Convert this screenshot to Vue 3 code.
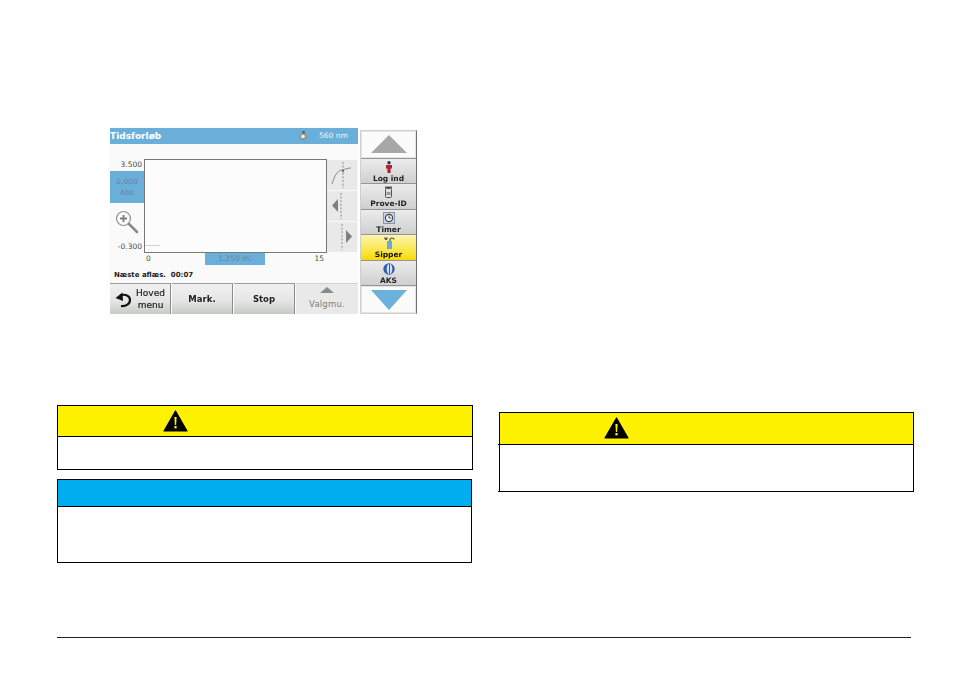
<template>
  <div class="page">
    <!-- instrument screen -->
    <div class="device">
      <div class="screen">
        <div class="title-bar">
          <span class="title">Tidsforløb</span>
          <svg class="lamp" width="9" height="12" viewBox="0 0 9 12">
            <circle cx="4.500" cy="7" r="3.600" fill="#96978e" />
            <circle cx="4" cy="6.500" r="1.800" fill="#f4f3ea" />
            <rect x="3.200" y="1" width="2.600" height="2.400" fill="#5d6166" />
          </svg>
          <span class="wavelength">560 nm</span>
        </div>

        <div class="chart-row">
          <div class="y-col">
            <div class="y-label top">3.500</div>
            <div class="abs-box">
              <span>0.000</span>
              <span>Abs</span>
            </div>
            <div class="zoom-wrap">
              <svg width="24" height="24" viewBox="0 0 24 24">
                <circle cx="8.500" cy="8.500" r="7" fill="#fafafa" stroke="#8f8f8f" stroke-width="1.200" />
                <path d="M8.500 5v7M5 8.500h7" stroke="#7d7d7d" stroke-width="1.800" />
                <path d="M14 14l8 8" stroke="#8a8a8a" stroke-width="2.600" stroke-linecap="round" />
              </svg>
            </div>
            <div class="y-label">-0.300</div>
          </div>

          <div class="plot">
            <span class="trace"></span>
          </div>

          <div class="side-tools">
            <div class="side-tool">
              <svg width="24" height="28" viewBox="0 0 24 28">
                <path d="M13 1v26" stroke="#8c8c8c" stroke-dasharray="2 1.600" />
                <path d="M2 23C5 14 7 10 12 9c4-1 6-2 9-2" fill="none" stroke="#8c8c8c" />
                <circle cx="13" cy="10" r="1.200" fill="#777" />
              </svg>
            </div>
            <div class="side-tool">
              <svg width="24" height="28" viewBox="0 0 24 28">
                <path d="M11 1v26" stroke="#8c8c8c" stroke-dasharray="2 1.600" />
                <path d="M8 7v13L2 13.500z" fill="#7f7f7f" />
              </svg>
            </div>
            <div class="side-tool">
              <svg width="24" height="28" viewBox="0 0 24 28">
                <path d="M12 1v26" stroke="#8c8c8c" stroke-dasharray="2 1.600" />
                <path d="M16 7v13l6-6.500z" fill="#7f7f7f" />
              </svg>
            </div>
          </div>
        </div>

        <div class="x-row">
          <span class="x-start">0</span>
          <span class="x-box">1.250 m.</span>
          <span class="x-end">15</span>
        </div>

        <div class="next-read">Næste aflæs.&nbsp; 00:07</div>

        <div class="actions">
          <div class="action home">
            <svg width="17" height="17" viewBox="0 0 17 17">
              <path d="M5 5C9 2.500 15 4 15 9c0 4-4 6.500-9 6" fill="none" stroke="#111" stroke-width="2.200" />
              <path d="M7.500 1.500l.5 8.500-7.500-3z" fill="#111" />
            </svg>
            <span class="home-text">Hoved<br />menu</span>
          </div>
          <div class="action">Mark.</div>
          <div class="action">Stop</div>
          <div class="action disabled">
            <span class="mini-up"></span>
            <span>Valgmu.</span>
          </div>
        </div>
      </div>

      <div class="panel">
        <div class="arrow-btn">
          <span class="arrow-up"></span>
        </div>

        <div class="tool">
          <svg width="8" height="12" viewBox="0 0 8 12">
            <circle cx="4" cy="1.800" r="1.700" fill="#2b3350" />
            <path d="M1 4h6v3.500H5.600V12H2.400V7.500H1z" fill="#a8262e" />
          </svg>
          <span>Log ind</span>
        </div>
        <div class="tool">
          <svg width="9" height="12" viewBox="0 0 9 12">
            <rect x="1" y="0.500" width="7" height="2" fill="#555" />
            <rect x="1.500" y="2.500" width="6" height="9" rx="1" fill="#e2e2da" stroke="#555" />
            <rect x="2.500" y="6" width="4" height="3" fill="#9a9a90" />
          </svg>
          <span>Prove-ID</span>
        </div>
        <div class="tool">
          <svg width="12" height="12" viewBox="0 0 12 12">
            <rect x="0.500" y="0.500" width="11" height="11" fill="#c7d3e6" stroke="#8b95a8" />
            <circle cx="6" cy="6" r="3.600" fill="#f4f4f4" stroke="#444" stroke-width="1.200" />
            <path d="M6 3.500V6h2" fill="none" stroke="#444" />
          </svg>
          <span>Timer</span>
        </div>
        <div class="tool active">
          <svg width="14" height="12" viewBox="0 0 14 12">
            <path d="M8 4V2.500Q8 1 10 1t2 1.500" fill="none" stroke="#444" stroke-width="1.200" />
            <path d="M2 0.500h4l-1 2.500H3z" fill="#55605a" />
            <rect x="5" y="4" width="5" height="8" fill="#6aa9dd" />
          </svg>
          <span>Sipper</span>
        </div>
        <div class="tool">
          <svg width="12" height="12" viewBox="0 0 12 12">
            <circle cx="6" cy="6" r="5.700" fill="#2c5fb8" />
            <ellipse cx="6.500" cy="6" rx="2.800" ry="5.400" fill="#d6e2f3" />
            <path d="M6.500 0.500v11" stroke="#2c5fb8" />
          </svg>
          <span>AKS</span>
        </div>

        <div class="arrow-btn down">
          <span class="arrow-down"></span>
        </div>
      </div>
    </div>

    <!-- notice boxes, text left empty as in the source -->
    <div class="columns">
      <div class="col-left">
        <div class="notice caution">
          <div class="notice-head">
            <svg class="warn" width="25" height="22" viewBox="0 0 25 22">
              <path d="M12.500 1L24 21H1z" fill="#000" stroke="#000" stroke-width="1.200" stroke-linejoin="round" />
              <path d="M11.400 7h2.200l-.5 8h-1.200z" fill="#fff200" />
              <rect x="11.400" y="16" width="2.200" height="2.400" fill="#fff200" />
            </svg>
          </div>
          <div class="notice-body"></div>
        </div>
        <div class="notice info">
          <div class="notice-head"></div>
          <div class="notice-body"></div>
        </div>
      </div>

      <div class="col-right">
        <div class="notice caution tall">
          <div class="notice-head">
            <svg class="warn" width="25" height="22" viewBox="0 0 25 22">
              <path d="M12.500 1L24 21H1z" fill="#000" stroke="#000" stroke-width="1.200" stroke-linejoin="round" />
              <path d="M11.400 7h2.200l-.5 8h-1.200z" fill="#fff200" />
              <rect x="11.400" y="16" width="2.200" height="2.400" fill="#fff200" />
            </svg>
          </div>
          <div class="notice-body"></div>
        </div>
      </div>
    </div>

    <div class="footer-rule"></div>
  </div>
</template>

<script setup>
</script>

<style>
html,
body {
  margin: 0;
  background: #fff;
}
</style>

<style scoped>
.page {
  width: 954px;
  height: 673px;
  padding-top: 127px;
  box-sizing: border-box;
  overflow: hidden;
  background: #fff;
  font-family: "DejaVu Sans", sans-serif;
}

/* DEVICE SCREENSHOT */
.device {
  display: flex;
  width: 307px;
  height: 188px;
  margin-left: 110px;
  filter: blur(0.35px);
}

.screen {
  display: flex;
  flex-direction: column;
  width: 248px;
  height: 187px;
  background: #fafafa;
}

.title-bar {
  display: flex;
  align-items: center;
  height: 16px;
  margin-top: 1px;
  background: #69afd9;
  color: #fff;
}

.title {
  flex: 1;
  margin-top: -1px;
  font-size: 9px;
  font-weight: 700;
}

.lamp {
  margin-right: 11px;
}

.wavelength {
  width: 39px;
  margin-top: -1px;
  font-size: 7.5px;
  color: #f2f7fb;
}

.chart-row {
  display: flex;
  height: 94px;
  margin-top: 15px;
}

.y-col {
  display: flex;
  flex-direction: column;
  width: 34px;
}

.y-label {
  height: 12px;
  padding-right: 2px;
  font-size: 7.5px;
  line-height: 12px;
  text-align: right;
  color: #4a4a4a;
}

.abs-box {
  display: flex;
  flex-direction: column;
  align-items: center;
  height: 32px;
  padding-top: 5px;
  box-sizing: border-box;
  background: #69afd9;
  font-size: 7.5px;
  line-height: 11px;
  color: #6d8494;
}

.zoom-wrap {
  flex: 1;
  padding: 7px 0 0 5px;
}

.plot {
  position: relative;
  width: 183px;
  height: 94px;
  box-sizing: border-box;
  border: 1px solid #777;
  background: #fcfcfc;
}

.trace {
  position: absolute;
  left: 0;
  bottom: 6px;
  width: 15px;
  height: 1px;
  background: #c6d8e4;
}

.side-tools {
  display: flex;
  flex-direction: column;
  width: 30px;
  height: 93px;
  margin-top: 1px;
}

.side-tool {
  display: flex;
  align-items: center;
  justify-content: center;
  flex: 1;
  background: #e9e9e9;
  border-bottom: 1px solid #fafafa;
}

.x-row {
  display: grid;
  grid-template-columns: 95px 60px 1fr;
  height: 12px;
  font-size: 7.5px;
  line-height: 12px;
  color: #4a4a4a;
}

.x-start {
  padding-left: 36px;
}

.x-box {
  background: #69afd9;
  text-align: center;
  color: #6d8494;
}

.x-end {
  padding-right: 34px;
  text-align: right;
}

.next-read {
  height: 18px;
  padding-left: 4px;
  font-size: 7px;
  font-weight: 700;
  line-height: 20px;
  color: #222;
}

.actions {
  display: grid;
  grid-template-columns: 61px 61px 61px 1fr;
  gap: 1px;
  flex: 1;
}

.action {
  display: flex;
  align-items: center;
  justify-content: center;
  border-top: 1px solid #9a9a9a;
  border-right: 1px solid #8d8d8d;
  background: linear-gradient(#f0f0f0, #e6e6e6 55%, #c4cbc4);
  font-size: 8.5px;
  font-weight: 700;
  color: #222;
}

.home {
  gap: 4px;
}

.home-text {
  font-size: 9px;
  font-weight: 500;
  line-height: 12px;
  text-align: center;
  -webkit-text-stroke: 0.2px #222;
}

.disabled {
  position: relative;
  padding-top: 9px;
  box-sizing: border-box;
  border-right: 0;
  border-top-color: #d0d0d0;
  background: #e9e9e9;
  font-size: 8.5px;
  font-weight: 400;
  letter-spacing: 0.2px;
  color: #7d7d7d;
}

.mini-up {
  position: absolute;
  top: 3px;
  left: 24px;
  border-left: 7px solid transparent;
  border-right: 7px solid transparent;
  border-bottom: 6px solid #8b8b8b;
}

.panel {
  display: flex;
  flex-direction: column;
  width: 57px;
  height: 184px;
  margin: 3px 0 0 2px;
  box-sizing: border-box;
  border: 1px solid #cfcfcf;
  border-right-color: #707070;
}

.arrow-btn {
  display: flex;
  align-items: center;
  justify-content: center;
  flex: 1;
  background: #fbfbfb;
  box-shadow: inset 0 0 0 1px #e4e4e4;
}

.arrow-up {
  border-left: 18px solid transparent;
  border-right: 18px solid transparent;
  border-bottom: 18px solid #a7a7a7;
}

.arrow-down {
  border-left: 18px solid transparent;
  border-right: 18px solid transparent;
  border-top: 20px solid #6cb0dc;
}

.tool {
  display: flex;
  flex-direction: column;
  align-items: center;
  height: 25.6px;
  padding-top: 2px;
  box-sizing: border-box;
  border-top: 1px solid #959595;
  background: linear-gradient(#ececec, #cfcfcf);
  font-size: 7.5px;
  font-weight: 700;
  line-height: 11px;
  color: #222;
}

.tool svg {
  flex-shrink: 0;
}

.active {
  background: linear-gradient(#fbf6b0, #fbe43a 70%, #f7d900);
  color: #111;
}

.down {
  border-top: 1px solid #959595;
}

/* NOTICES */
.columns {
  display: flex;
  margin-top: 90px;
}

.col-left {
  display: flex;
  flex-direction: column;
  gap: 9px;
  margin-left: 57px;
}

.col-right {
  margin: 7px 0 0 26px;
}

.notice {
  position: relative;
  display: flex;
  flex-direction: column;
  width: 415px;
  box-sizing: border-box;
  border: 1px solid #000;
  background: #fff;
}

.notice-head {
  display: flex;
  align-items: flex-start;
  padding: 4px 0 0 105px;
  box-sizing: border-box;
  border-bottom: 1px solid #000;
}

.caution {
  width: 416px;
  height: 65px;
}

.caution .notice-head {
  height: 31px;
  background: #fff200;
}

.info {
  height: 84px;
}

.info .notice-head {
  height: 27px;
  background: #00aeef;
}

.tall {
  width: 415px;
  height: 80px;
}

.tall .notice-head {
  height: 32px;
  padding-left: 104px;
}

/* the rules stick out one pixel on the left of this box */
.tall::before {
  content: "";
  position: absolute;
  top: 31px;
  left: -2px;
  width: 1px;
  height: 1px;
  background: #000;
  box-shadow: 0 47px #000;
}

.notice-body {
  flex: 1;
}

.footer-rule {
  width: 854px;
  height: 1px;
  margin: 74px 0 0 57px;
  background: #222;
}
</style>
